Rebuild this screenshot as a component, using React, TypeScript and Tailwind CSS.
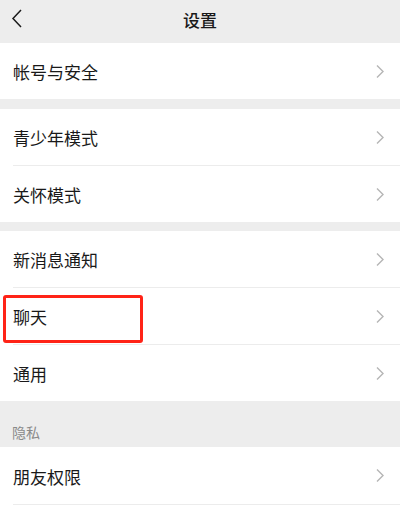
import React from "react";

const Chevron = () => (
  <svg width="10" height="15" viewBox="0 0 10 15" className="shrink-0">
    <polyline points="2,1.5 8,7.5 2,13.5" fill="none" stroke="#b5b5b5" strokeWidth="1.4" />
  </svg>
);

const Row = ({ label, divider = false, highlight = false, h = "h-[56px]" }: { label: string; divider?: boolean; highlight?: boolean; h?: string }) => (
  <div className="bg-white">
    {divider && <div className="ml-[13px] h-px bg-[#ececec]" />}
    <div className={`relative flex ${h} items-center justify-between pl-[13px] pr-[15px]`}>
      <span className="text-[17px] text-[#191919] leading-none pt-[1px]">{label}</span>
      <Chevron />
      {highlight && (
        <div className="absolute left-[3px] top-[7px] h-[48px] w-[140px] rounded-[3px] border-[3px] border-[#ff2317]" />
      )}
    </div>
  </div>
);

export default function App() {
  return (
    <div
      className="w-[400px] h-[511px] overflow-hidden bg-white"
      style={{ fontFamily: '"Noto Sans CJK SC", "Noto Sans", sans-serif' }}
    >
      <div className="relative flex h-[43px] items-center justify-center bg-[#ededed] pb-[4px]">
        <svg width="12" height="19" viewBox="0 0 12 19" className="absolute left-[11px] top-[9px]">
          <polyline points="10,1 2,9.5 10,18" fill="none" stroke="#1a1a1a" strokeWidth="1.5" />
        </svg>
        <span className="text-[17px] font-medium text-[#191919] leading-none">设置</span>
      </div>
      <Row label="帐号与安全" />
      <div className="h-[10px] bg-[#ededed]" />
      <Row label="青少年模式" />
      <Row label="关怀模式" divider />
      <div className="h-[9px] bg-[#ededed]" />
      <Row label="新消息通知" />
      <Row label="聊天" divider highlight />
      <Row label="通用" divider />
      <div className="flex h-[46px] items-end bg-[#ededed] pl-[12px] pb-[8px]">
        <span className="text-[14px] leading-none text-[#8a8a8a]">隐私</span>
      </div>
      <Row label="朋友权限" h="h-[57px]" />
      <div className="ml-[13px] h-px bg-[#ececec]" />
    </div>
  );
}
